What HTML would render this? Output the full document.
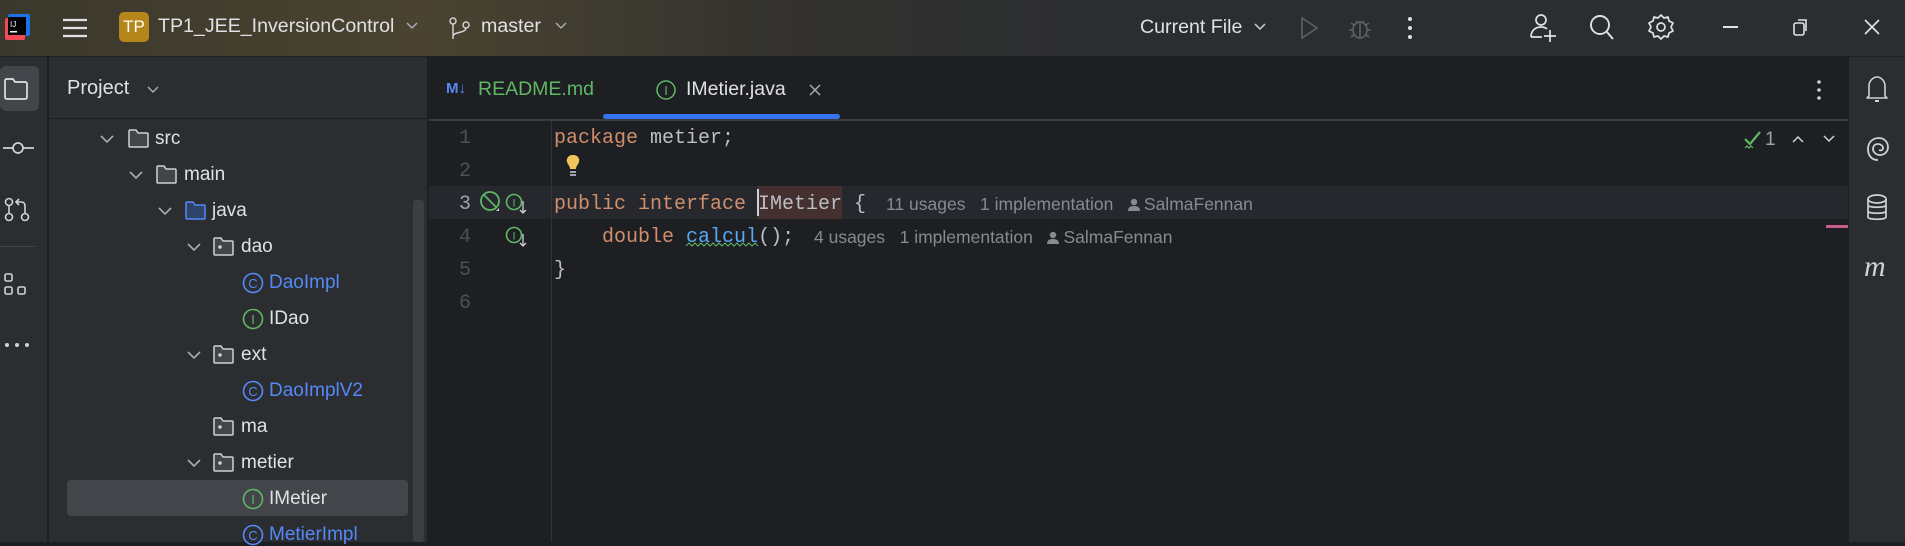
<!DOCTYPE html>
<html><head><meta charset="utf-8"><style>
*{margin:0;padding:0;box-sizing:border-box}
body{width:1905px;height:542px;overflow:hidden;background:#1e1f22;font-family:"Liberation Sans",sans-serif;position:relative;color:#dfe1e5}
.a{position:absolute;white-space:nowrap}
.mono{font-family:"Liberation Mono",monospace;font-size:20px}
.tree{font-size:19px;color:#dfe1e5}
.hint{font-size:17.5px;color:#868a91}
.pi{display:inline-block;width:12px;height:13px;vertical-align:-1px;margin-right:4px}
svg{position:absolute;overflow:visible}
.pi svg{position:static}
</style></head><body>
<!-- title bar -->
<div class="a" style="left:0;top:0;width:1905px;height:57px;background:linear-gradient(90deg,#3a372c 0%,#4a4330 22%,#34332f 40%,#2b2d30 60%);border-bottom:1px solid #1e1f22"></div>
<svg style="left:5px;top:14px" width="26" height="26"><rect x="3" y="0" width="22" height="22" fill="#1a73e8" rx="2"/><rect x="0" y="4" width="20" height="22" fill="#f04a5b" rx="2"/><rect x="3" y="3" width="18" height="18" fill="#000"/><text x="5" y="13" font-size="8" fill="#fff" font-family="Liberation Sans">IJ</text><rect x="5" y="17" width="7" height="1.5" fill="#fff"/></svg>
<svg style="left:62px;top:17px" width="26" height="22"><path d="M1 3H25M1 11H25M1 19H25" stroke="#dfe1e5" stroke-width="2.2"/></svg>
<div class="a" style="left:119px;top:12px;width:30px;height:30px;background:#b5861a;border-radius:5px;color:#fff;font-size:17px;line-height:30px;text-align:center">TP</div>
<div class="a" style="left:158px;top:15px;font-size:19.6px;color:#dfe1e5">TP1_JEE_InversionControl</div>
<svg style="left:406px;top:22px" width="12" height="8"><path d="M1 1L6 6L11 1" stroke="#a8abb0" stroke-width="1.5" fill="none"/></svg>
<svg style="left:449px;top:17px" width="22" height="24"><circle cx="4" cy="4" r="3" stroke="#cfd1d6" stroke-width="1.5" fill="none"/><circle cx="17" cy="8" r="3" stroke="#cfd1d6" stroke-width="1.5" fill="none"/><path d="M4 7V22M17 11C17 16 4 15 4 19" stroke="#cfd1d6" stroke-width="1.5" fill="none"/></svg>
<div class="a" style="left:481px;top:15px;font-size:19.6px;color:#dfe1e5">master</div>
<svg style="left:555px;top:22px" width="12" height="8"><path d="M1 1L6 6L11 1" stroke="#a8abb0" stroke-width="1.5" fill="none"/></svg>
<div class="a" style="left:1140px;top:16px;font-size:19.6px;color:#dfe1e5">Current File</div>
<svg style="left:1254px;top:23px" width="12" height="8"><path d="M1 1L6 6L11 1" stroke="#cfd1d6" stroke-width="1.5" fill="none"/></svg>
<svg style="left:1300px;top:16px" width="20" height="24"><path d="M2 2L17 12L2 22Z" stroke="#5e6167" stroke-width="1.6" fill="none"/></svg>
<svg style="left:1348px;top:15px" width="24" height="26"><ellipse cx="12" cy="15" rx="7" ry="8" stroke="#5e6167" stroke-width="1.6" fill="none"/><path d="M12 7V23M1 15H5M19 15H23M3 8L6 10M21 8L18 10M3 22L6 20M21 22L18 20M8 6L10 8M16 6L14 8" stroke="#5e6167" stroke-width="1.6"/></svg>
<svg style="left:1406px;top:16px" width="8" height="24"><circle cx="4" cy="3" r="2" fill="#dfe1e5"/><circle cx="4" cy="12" r="2" fill="#dfe1e5"/><circle cx="4" cy="21" r="2" fill="#dfe1e5"/></svg>
<svg style="left:1530px;top:13px" width="28" height="30"><circle cx="11" cy="7" r="5" stroke="#dfe1e5" stroke-width="1.7" fill="none"/><path d="M1 24C1 17 6 14 11 14C14 14 16 15 17 16M1 24H12M20 17V29M14 23H26" stroke="#dfe1e5" stroke-width="1.7" fill="none"/></svg>
<svg style="left:1589px;top:14px" width="26" height="28"><circle cx="11" cy="11" r="9" stroke="#dfe1e5" stroke-width="1.9" fill="none"/><path d="M17.5 17.5L24 25" stroke="#dfe1e5" stroke-width="2"/></svg>
<svg style="left:1648px;top:14px" width="26" height="28"><path d="M13 1L16 4L20 3L21 7L25 9L23 13L25 17L21 19L20 23L16 22L13 25L10 22L6 23L5 19L1 17L3 13L1 9L5 7L6 3L10 4Z" stroke="#dfe1e5" stroke-width="1.7" fill="none" stroke-linejoin="round"/><circle cx="13" cy="13" r="4" stroke="#dfe1e5" stroke-width="1.7" fill="none"/></svg>
<div class="a" style="left:1723px;top:26px;width:15px;height:2px;background:#dfe1e5"></div>
<svg style="left:1793px;top:19px" width="16" height="18"><rect x="1" y="4" width="10" height="12" rx="2" stroke="#dfe1e5" stroke-width="1.6" fill="none"/><path d="M5 1H13V12" stroke="#dfe1e5" stroke-width="1.6" fill="none"/></svg>
<svg style="left:1864px;top:19px" width="16" height="16"><path d="M1 1L15 15M15 1L1 15" stroke="#dfe1e5" stroke-width="1.7"/></svg>

<!-- left stripe -->
<div class="a" style="left:0;top:57px;width:48px;height:485px;background:#2b2d30;border-right:1px solid #1e1f22"></div>
<div class="a" style="left:0;top:66px;width:39px;height:45px;background:#43454a;border-radius:6px"></div>
<svg style="left:4px;top:78px" width="24" height="22"><path d="M1 3Q1 1 3 1H9L11 4H21Q23 4 23 6V19Q23 21 21 21H3Q1 21 1 19Z" stroke="#dfe1e5" stroke-width="1.7" fill="none"/></svg>
<svg style="left:2px;top:140px" width="32" height="16"><circle cx="16" cy="8" r="5" stroke="#cfd1d6" stroke-width="1.7" fill="none"/><path d="M1 8H11M21 8H32" stroke="#cfd1d6" stroke-width="1.7"/></svg>
<svg style="left:4px;top:197px" width="26" height="24"><circle cx="5" cy="5" r="3.5" stroke="#cfd1d6" stroke-width="1.6" fill="none"/><circle cx="5" cy="20" r="3.5" stroke="#cfd1d6" stroke-width="1.6" fill="none"/><circle cx="21" cy="20" r="3.5" stroke="#cfd1d6" stroke-width="1.6" fill="none"/><path d="M5 9V16M21 16V9Q21 5 17 5H13M15 2L12 5L15 8" stroke="#cfd1d6" stroke-width="1.6" fill="none"/></svg>
<div class="a" style="left:0;top:246px;width:35px;height:1px;background:#43454a"></div>
<svg style="left:4px;top:273px" width="24" height="24"><rect x="1" y="1" width="7" height="7" rx="1.5" stroke="#cfd1d6" stroke-width="1.6" fill="none"/><rect x="1" y="14" width="7" height="7" rx="1.5" stroke="#cfd1d6" stroke-width="1.6" fill="none"/><rect x="14" y="14" width="7" height="7" rx="1.5" stroke="#cfd1d6" stroke-width="1.6" fill="none"/></svg>
<svg style="left:4px;top:342px" width="26" height="6"><circle cx="3" cy="3" r="2" fill="#cfd1d6"/><circle cx="13" cy="3" r="2" fill="#cfd1d6"/><circle cx="23" cy="3" r="2" fill="#cfd1d6"/></svg>

<!-- project panel -->
<div class="a" style="left:49px;top:57px;width:379px;height:485px;background:#2b2d30;border-right:1px solid #1e1f22"></div>
<div class="a" style="left:49px;top:118px;width:379px;height:1px;background:#1e1f22"></div>
<div class="a" style="left:67px;top:77px;font-size:20px;color:#dfe1e5">Project</div>
<svg style="left:147px;top:86px" width="12" height="8"><path d="M1 1L6 6L11 1" stroke="#a8abb0" stroke-width="1.5" fill="none"/></svg>
<div class="a" style="left:413px;top:200px;width:11px;height:342px;background:#3c3e42;border-radius:3px"></div>
<div class="a" style="left:67px;top:480px;width:341px;height:36px;background:#43454a;border-radius:4px"></div>

<svg style="left:0;top:0" width="430" height="542">
<g stroke="#a8abb0" stroke-width="1.6" fill="none">
<path d="M101 136L107 142L113 136M130 172L136 178L142 172M159 208L165 214L171 208M188 244L194 250L200 244M188 352L194 358L200 352M188 460L194 466L200 460"/>
</g>
<g stroke="#cfd1d6" stroke-width="1.5" fill="#43454a">
<path d="M129 131Q129 130 130 130H136L138 133H147Q148 133 148 134V146Q148 147 147 147H130Q129 147 129 146Z"/>
<path d="M157 167Q157 166 158 166H164L166 169H175Q176 169 176 170V182Q176 183 175 183H158Q157 183 157 182Z"/>
<path d="M214 239Q214 238 215 238H221L223 241H232Q233 241 233 242V254Q233 255 232 255H215Q214 255 214 254Z"/>
<path d="M214 347Q214 346 215 346H221L223 349H232Q233 349 233 350V362Q233 363 232 363H215Q214 363 214 362Z"/>
<path d="M214 419Q214 418 215 418H221L223 421H232Q233 421 233 422V434Q233 435 232 435H215Q214 435 214 434Z"/>
<path d="M214 455Q214 454 215 454H221L223 457H232Q233 457 233 458V470Q233 471 232 471H215Q214 471 214 470Z"/>
</g>
<path d="M186 203Q186 202 187 202H193L195 205H204Q205 205 205 206V218Q205 219 204 219H187Q186 219 186 218Z" stroke="#548af7" stroke-width="1.5" fill="#2e4469"/>
<g fill="#cfd1d6"><circle cx="220" cy="247" r="1.8"/><circle cx="220" cy="355" r="1.8"/><circle cx="220" cy="427" r="1.8"/><circle cx="220" cy="463" r="1.8"/></g>
<g stroke-width="1.6" fill="none">
<circle cx="253" cy="283" r="9.5" stroke="#548af7"/><circle cx="253" cy="391" r="9.5" stroke="#548af7"/><circle cx="253" cy="535" r="9.5" stroke="#548af7"/>
<circle cx="253" cy="319" r="9.5" stroke="#5fb865"/><circle cx="253" cy="499" r="9.5" stroke="#5fb865"/>
</g>
<g font-family="Liberation Sans" font-size="13" text-anchor="middle">
<text x="253" y="288" fill="#548af7">C</text><text x="253" y="396" fill="#548af7">C</text><text x="253" y="540" fill="#548af7">C</text>
<text x="253" y="324" fill="#5fb865">I</text><text x="253" y="504" fill="#5fb865">I</text>
</g>
</svg>
<div class="a tree" style="left:155px;top:128px">src</div>
<div class="a tree" style="left:184px;top:164px">main</div>
<div class="a tree" style="left:212px;top:200px">java</div>
<div class="a tree" style="left:241px;top:236px">dao</div>
<div class="a tree" style="left:269px;top:272px;color:#548af7">DaoImpl</div>
<div class="a tree" style="left:269px;top:308px">IDao</div>
<div class="a tree" style="left:241px;top:344px">ext</div>
<div class="a tree" style="left:269px;top:380px;color:#548af7">DaoImplV2</div>
<div class="a tree" style="left:241px;top:416px">ma</div>
<div class="a tree" style="left:241px;top:452px">metier</div>
<div class="a tree" style="left:269px;top:488px">IMetier</div>
<div class="a tree" style="left:269px;top:524px;color:#548af7">MetierImpl</div>

<!-- tabs -->
<div class="a" style="left:429px;top:119px;width:1419px;height:2px;background:#393b40"></div>
<div class="a" style="left:446px;top:80px;font-size:15px;font-weight:bold;color:#548af7">M↓</div>
<div class="a" style="left:478px;top:78px;font-size:19.5px;color:#5fb865">README.md</div>
<svg style="left:656px;top:80px" width="20" height="20"><circle cx="10" cy="10" r="9" stroke="#5fb865" stroke-width="1.5" fill="none"/><text x="10" y="15" font-size="13" fill="#5fb865" text-anchor="middle" font-family="Liberation Sans">I</text></svg>
<div class="a" style="left:686px;top:78px;font-size:19.5px;color:#dfe1e5">IMetier.java</div>
<svg style="left:809px;top:84px" width="12" height="12"><path d="M1 1L11 11M11 1L1 11" stroke="#a8abb0" stroke-width="1.5"/></svg>
<div class="a" style="left:603px;top:114px;width:237px;height:5px;background:#3574f0;border-radius:3px"></div>
<svg style="left:1816px;top:80px" width="6" height="20"><circle cx="3" cy="2" r="1.8" fill="#cfd1d6"/><circle cx="3" cy="10" r="1.8" fill="#cfd1d6"/><circle cx="3" cy="18" r="1.8" fill="#cfd1d6"/></svg>

<!-- editor -->
<div class="a" style="left:429px;top:186px;width:1419px;height:33px;background:#26282e"></div>
<div class="a" style="left:551px;top:121px;width:1px;height:421px;background:#313438"></div>
<div class="a mono" style="left:459px;top:122px;color:#4b5059;line-height:33px;width:12px;text-align:right">1<br>2<br><span style="color:#a1a3ab">3</span><br>4<br>5<br>6</div>
<svg style="left:478px;top:189px" width="60" height="60">
<circle cx="12" cy="12" r="9" stroke="#5fb865" stroke-width="1.8" fill="none"/><path d="M6 6L18 18" stroke="#5fb865" stroke-width="1.8"/><path d="M21 19L21 22L18 22Z" fill="#cfd1d6"/>
<circle cx="36" cy="13" r="7.5" stroke="#5fb865" stroke-width="1.6" fill="none"/><text x="36" y="17.5" font-size="11" fill="#5fb865" text-anchor="middle" font-family="Liberation Sans">I</text><path d="M45 12V24M42 21L45 24L48 21" stroke="#cfd1d6" stroke-width="1.3" fill="none"/>
<circle cx="36" cy="46" r="7.5" stroke="#5fb865" stroke-width="1.6" fill="none"/><text x="36" y="50.5" font-size="11" fill="#5fb865" text-anchor="middle" font-family="Liberation Sans">I</text><path d="M45 45V57M42 54L45 57L48 54" stroke="#cfd1d6" stroke-width="1.3" fill="none"/>
</svg>
<svg style="left:565px;top:154px" width="16" height="24"><path d="M8 1C3 1 1 5 2 8C3 11 5 12 5 15H11C11 12 13 11 14 8C15 5 13 1 8 1Z" fill="#f2c55c"/><path d="M5 18H11M5 21H11" stroke="#cfd1d6" stroke-width="1.5"/></svg>
<div class="a" style="left:757px;top:186px;width:85px;height:33px;background:#43302f"></div>
<div class="a" style="left:757px;top:189px;width:2px;height:27px;background:#ced0d6"></div>
<div class="a mono" style="left:554px;top:122px;line-height:33px;color:#bcbec4">
<span style="color:#cf8e6d">package</span> metier;<br><br>
<span style="color:#cf8e6d">public interface</span> IMetier {<br>
&nbsp;&nbsp;&nbsp;&nbsp;<span style="color:#cf8e6d">double</span> <span style="color:#56a8f5">calcul</span>();<br>}
</div>
<svg style="left:686px;top:243px" width="72" height="6"><path d="M0 3L3 0L6 3L9 0L12 3L15 0L18 3L21 0L24 3L27 0L30 3L33 0L36 3L39 0L42 3L45 0L48 3L51 0L54 3L57 0L60 3L63 0L66 3L69 0L72 3" stroke="#5fb865" stroke-width="1" fill="none"/></svg>
<div class="a hint" style="left:886px;top:194px">11 usages&nbsp;&nbsp;&nbsp;1 implementation&nbsp;&nbsp;&nbsp;<span class="pi"><svg width="12" height="13"><circle cx="6" cy="4" r="3.2" fill="#868a91"/><path d="M0 13C0 9 3 8 6 8C9 8 12 9 12 13Z" fill="#868a91"/></svg></span>SalmaFennan</div>
<div class="a hint" style="left:814px;top:227px">4 usages&nbsp;&nbsp;&nbsp;1 implementation&nbsp;&nbsp;&nbsp;<span class="pi"><svg width="12" height="13"><circle cx="6" cy="4" r="3.2" fill="#868a91"/><path d="M0 13C0 9 3 8 6 8C9 8 12 9 12 13Z" fill="#868a91"/></svg></span>SalmaFennan</div>
<svg style="left:1743px;top:130px" width="20" height="20"><path d="M2 9L7 14L17 2" stroke="#5fb865" stroke-width="2.2" fill="none"/><path d="M2 18L4 16L6 18L8 16L10 18" stroke="#5fb865" stroke-width="1.2" fill="none"/></svg>
<div class="a" style="left:1765px;top:129px;font-size:19px;color:#a1a3ab">1</div>
<svg style="left:1792px;top:135px" width="12" height="8"><path d="M1 7L6 2L11 7" stroke="#cfd1d6" stroke-width="1.5" fill="none"/></svg>
<svg style="left:1823px;top:135px" width="12" height="8"><path d="M1 1L6 6L11 1" stroke="#cfd1d6" stroke-width="1.5" fill="none"/></svg>
<div class="a" style="left:1826px;top:225px;width:22px;height:3px;background:#c75d8d"></div>

<!-- right stripe -->
<div class="a" style="left:1848px;top:57px;width:57px;height:485px;background:#2b2d30;border-left:1px solid #1e1f22"></div>
<svg style="left:1865px;top:75px" width="26" height="30"><path d="M4 21V11C4 6 8 2 12 2C16 2 20 6 20 11V21L22 23H2Z" stroke="#cfd1d6" stroke-width="1.6" fill="none" stroke-linejoin="round"/><path d="M10 26H14" stroke="#cfd1d6" stroke-width="2"/></svg>
<svg style="left:1866px;top:136px" width="24" height="26"><path d="M12 24C5 24 2 19 2 13C2 6 7 2 13 2C18 2 22 6 22 11C22 16 18 19 14 19C10 19 7 16 7 13C7 10 9 8 12 8C15 8 17 10 17 12C17 14 15 15 13 14" stroke="#cfd1d6" stroke-width="1.8" fill="none"/></svg>
<svg style="left:1866px;top:194px" width="22" height="28"><ellipse cx="11" cy="5" rx="9" ry="4" stroke="#cfd1d6" stroke-width="1.7" fill="none"/><path d="M2 5V23C2 26 20 26 20 23V5M2 11C2 14 20 14 20 11M2 17C2 20 20 20 20 17" stroke="#cfd1d6" stroke-width="1.7" fill="none"/></svg>
<div class="a" style="left:1864px;top:250px;font-size:30px;font-style:italic;color:#cfd1d6;font-family:'Liberation Serif',serif">m</div>
</body></html>
